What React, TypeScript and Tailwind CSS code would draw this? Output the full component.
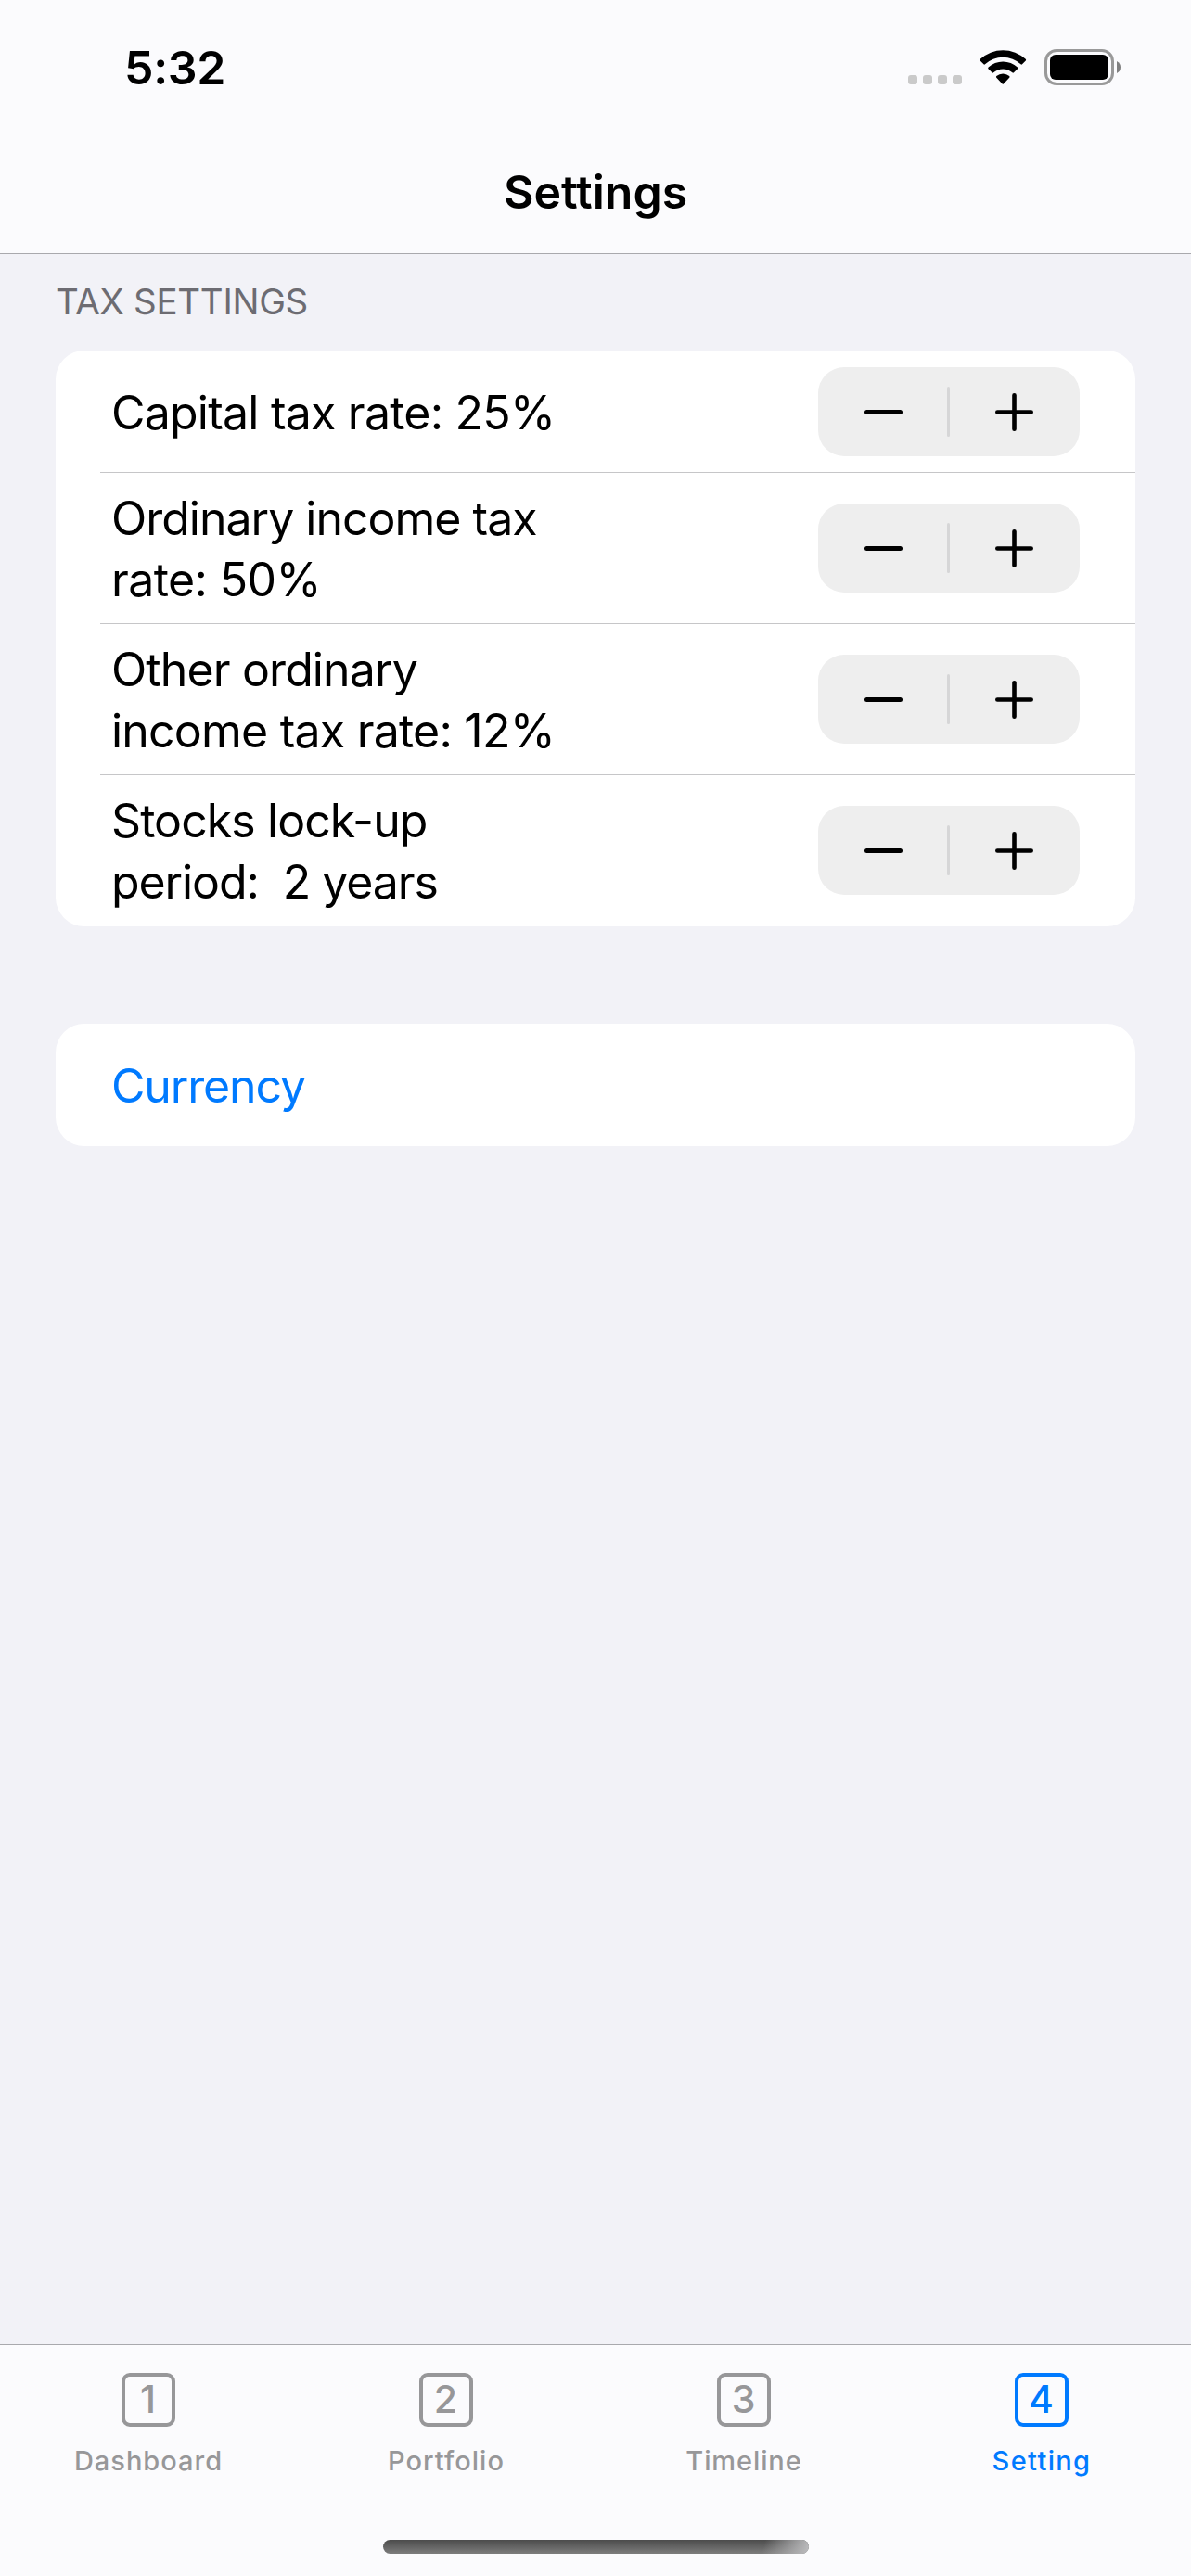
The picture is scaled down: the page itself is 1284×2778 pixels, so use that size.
function StatusBar() {
  return (
    <div className="flex h-[141px] items-start justify-between pr-[76px] pl-[134px]">
      <span className="mt-[43px] text-[50px] leading-[60px] font-semibold tracking-[-0.3px]">5:32</span>
      <div className="mt-[53px] flex items-start">
        <div className="mt-[28px] flex gap-[6px]">
          {[0, 1, 2, 3].map((i) => (
            <span key={i} className="size-[10px] rounded-[3px] bg-[#cacaca]" />
          ))}
        </div>
        <svg className="mt-px ml-[19px] h-[38px] w-[51px]" viewBox="0 0 51 38" fill="#000">
          <path d="M.8 9.8A36 36 0 0 1 49.7 9.8Q50.5 10.6 49.8 11.4L46 15.3Q45.3 16 44.5 15.3A28.5 28.5 0 0 0 6 15.3Q5.2 16 4.5 15.3L.7 11.4Q0 10.6 .8 9.8Z" />
          <path d="M9.6 18.6A23 23 0 0 1 40.9 18.6Q41.8 19.5 41 20.3L37 24.2Q36.2 25 35.4 24.3A15.5 15.5 0 0 0 15.1 24.3Q14.3 25 13.5 24.2L9.5 20.3Q8.7 19.5 9.6 18.6Z" />
          <path d="M18.3 28.1A10.5 10.5 0 0 1 32.2 28.1Q33 29 32.2 29.8L25.9 36.4Q25.25 37 24.6 36.4L18.3 29.8Q17.5 29 18.3 28.1Z" />
        </svg>
        <div className="ml-[19px] flex items-center">
          <div className="h-[39px] w-[75px] rounded-[13px] border-[3px] border-[#999999] p-[3px]">
            <div className="h-full rounded-[6px] bg-black" />
          </div>
          <svg className="ml-[3px] h-[13px] w-[4px]" viewBox="0 0 4 13" fill="#808080">
            <path d="M0 0Q4 2 4 6.500Q4 11 0 13Z" />
          </svg>
        </div>
      </div>
    </div>
  );
}

function Stepper() {
  return (
    <div className="flex h-[96px] w-[282px] items-center rounded-[28px] bg-[#eeeeee] pl-[50px]">
      <button className="mt-px h-[5px] w-[41px] rounded-full bg-black" aria-label="Decrease" />
      <span className="ml-[48px] h-[54px] w-[3px] rounded-full bg-[#d6d6d7]" />
      <button className="mt-px ml-[49px]" aria-label="Increase">
        <svg className="block size-[41px]" viewBox="0 0 41 41" stroke="#000" strokeWidth="4.6" strokeLinecap="round">
          <path d="M2.300 20.500H38.700M20.500 2.300V38.700" />
        </svg>
      </button>
    </div>
  );
}

const settings = [
  { height: "h-[131px]", lines: [{ text: "Capital tax rate: 25%", tracking: "tracking-[-0.78px]" }] },
  {
    height: "h-[162px]",
    lines: [
      { text: "Ordinary income tax", tracking: "tracking-[-1px]" },
      { text: "rate: 50%", tracking: "tracking-[-0.6px]" },
    ],
  },
  {
    height: "h-[162px]",
    lines: [
      { text: "Other ordinary", tracking: "tracking-[-0.88px]" },
      { text: "income tax rate: 12%", tracking: "tracking-[-0.78px]" },
    ],
  },
  {
    height: "h-[162px]",
    lines: [
      { text: "Stocks lock-up", tracking: "tracking-[-0.92px]" },
      { text: "period:  2 years", tracking: "tracking-[-1.09px]" },
    ],
  },
];

const tabs = [
  { label: "Dashboard", digit: "1", tracking: "tracking-[1px]" },
  { label: "Portfolio", digit: "2", tracking: "tracking-[1.05px]" },
  { label: "Timeline", digit: "3", tracking: "tracking-[0.9px]" },
  { label: "Setting", digit: "4", tracking: "tracking-[1.35px]", active: true },
];

export default function App() {
  return (
    <div className="flex h-[2778px] w-[1284px] flex-col overflow-hidden bg-[#f2f2f7] font-[Inter,sans-serif] text-black">
      <header className="h-[274px] border-b border-[#a9a9ad] bg-[#fbfbfd]">
        <StatusBar />
        <h1 className="mt-[36px] text-center text-[50px] leading-[60px] font-semibold">Settings</h1>
      </header>

      <main className="flex-1 px-[60px]">
        <h2 className="flex h-[104px] items-start pt-[28px] text-[38.5px] leading-[46px] tracking-[-0.3px] text-[#6d6c72]">
          TAX SETTINGS
        </h2>
        <section className="rounded-[31px] bg-white pb-px">
          {settings.map((row, i) => (
            <div key={i}>
              <div className={`flex items-center justify-between pr-[60px] pl-[60px] ${row.height}`}>
                <div className="pt-[2px] text-[50px] leading-[66px] whitespace-pre">
                  {row.lines.map((line) => (
                    <p key={line.text} className={line.tracking}>
                      {line.text}
                    </p>
                  ))}
                </div>
                <Stepper />
              </div>
              {i < settings.length - 1 && <div className="ml-[48px] h-px bg-[#c6c6c8]" />}
            </div>
          ))}
        </section>
        <section className="mt-[105px] flex h-[132px] items-center rounded-[31px] bg-white pt-[2px] pl-[60px]">
          <button className="text-[50px] leading-[66px] tracking-[-1.15px] text-[#007aff]">Currency</button>
        </section>
      </main>

      <footer className="flex h-[250px] flex-col items-center border-t border-[#a9a9ad] bg-[#fbfbfd]">
        <nav className="grid w-full grid-cols-4">
          {tabs.map((tab) => (
            <button
              key={tab.label}
              className={`flex flex-col items-center pt-[30px] ${tab.active ? "text-[#007aff]" : "text-[#979799]"}`}
            >
              <span className="mr-[2px] flex size-[58px] items-center justify-center rounded-[9px] border-[4px] border-current pb-[2px] text-[41px] leading-[50px] font-medium">
                {tab.digit}
              </span>
              <span className={`mt-[19px] mr-px text-[29px] leading-[36px] font-medium ${tab.tracking}`}>{tab.label}</span>
            </button>
          ))}
        </nav>
        <div className="mt-[67px] h-[15px] w-[459px] overflow-hidden rounded-full bg-linear-to-b from-[#4c4c4c] to-[#7d7d7d]">
          <div className="ml-auto h-full w-[56px] bg-[linear-gradient(105deg,transparent_15%,#b8b8ba_95%)]" />
        </div>
      </footer>
    </div>
  );
}
